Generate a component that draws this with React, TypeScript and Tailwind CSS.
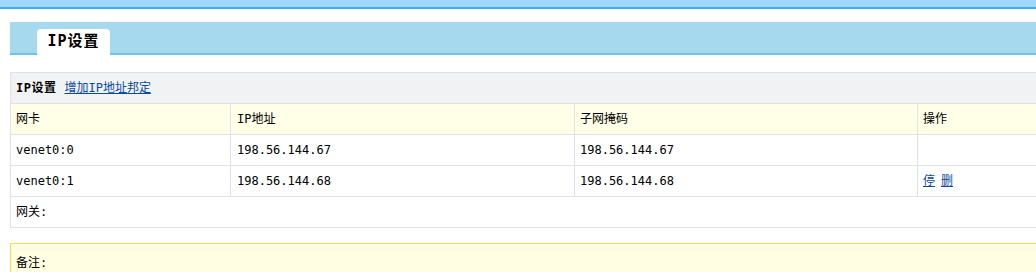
import React from "react";

const font = { fontFamily: '"DejaVu Sans Mono", "Noto Sans CJK SC", monospace' };

export default function App() {
  const rows = [
    { nic: "venet0:0", ip: "198.56.144.67", mask: "198.56.144.67", ops: false },
    { nic: "venet0:1", ip: "198.56.144.68", mask: "198.56.144.68", ops: true },
  ];
  return (
    <div className="w-[1036px] h-[272px] overflow-hidden bg-white text-[12px] text-black" style={font}>
      <div className="w-[1100px]">
        <div className="h-[9px] bg-[#a0d7fb] border-b-2 border-[#3db1ef]" />
        <div className="pl-[10px] pt-[13px]">
          <div className="h-[33px] bg-[#a6d8ee] border-b-2 border-[#6ec3ea] flex items-end pl-[27px]">
            <div className="w-[73px] h-[26px] bg-white rounded-t-[4px] flex items-center justify-center text-[15px] tracking-[1px] font-bold -mb-[2px] pb-[1px]">
              IP设置
            </div>
          </div>
          <div className="mt-[17px] border border-[#dfe2e7]">
            <div className="h-[31px] bg-[#f1f2f4] flex items-center pl-[5px] border-b border-[#dfe2e7]">
              <span className="font-bold tracking-[0.5px]">IP设置</span>
              <a className="ml-[8px] text-[#0b4aa0] underline">增加IP地址邦定</a>
            </div>
            <div className="flex h-[31px] bg-[#fffee6] border-b border-[#dfe2e7] items-center">
              <div className="w-[220px] pl-[5px] border-r border-[#dfe2e7] h-full flex items-center">网卡</div>
              <div className="w-[344px] pl-[6px] border-r border-[#dfe2e7] h-full flex items-center">IP地址</div>
              <div className="w-[343px] pl-[5px] border-r border-[#dfe2e7] h-full flex items-center">子网掩码</div>
              <div className="flex-1 pl-[5px] h-full flex items-center">操作</div>
            </div>
            {rows.map((r) => (
              <div key={r.nic} className="flex h-[31px] border-b border-[#dfe2e7] items-center">
                <div className="w-[220px] pl-[5px] border-r border-[#dfe2e7] h-full flex items-center">{r.nic}</div>
                <div className="w-[344px] pl-[6px] border-r border-[#dfe2e7] h-full flex items-center">{r.ip}</div>
                <div className="w-[343px] pl-[5px] border-r border-[#dfe2e7] h-full flex items-center">{r.mask}</div>
                <div className="flex-1 pl-[5px] h-full flex items-center gap-[6px]">
                  {r.ops && (
                    <>
                      <a className="text-[#0b4aa0] underline">停</a>
                      <a className="text-[#0b4aa0] underline">删</a>
                    </>
                  )}
                </div>
              </div>
            ))}
            <div className="h-[30px] pl-[5px] flex items-center">网关:</div>
          </div>
          <div className="mt-[15px] h-[40px] border border-[#ffd84f] bg-[#fffee3] pl-[5px] pt-[10px]">
            备注:
          </div>
        </div>
      </div>
    </div>
  );
}
